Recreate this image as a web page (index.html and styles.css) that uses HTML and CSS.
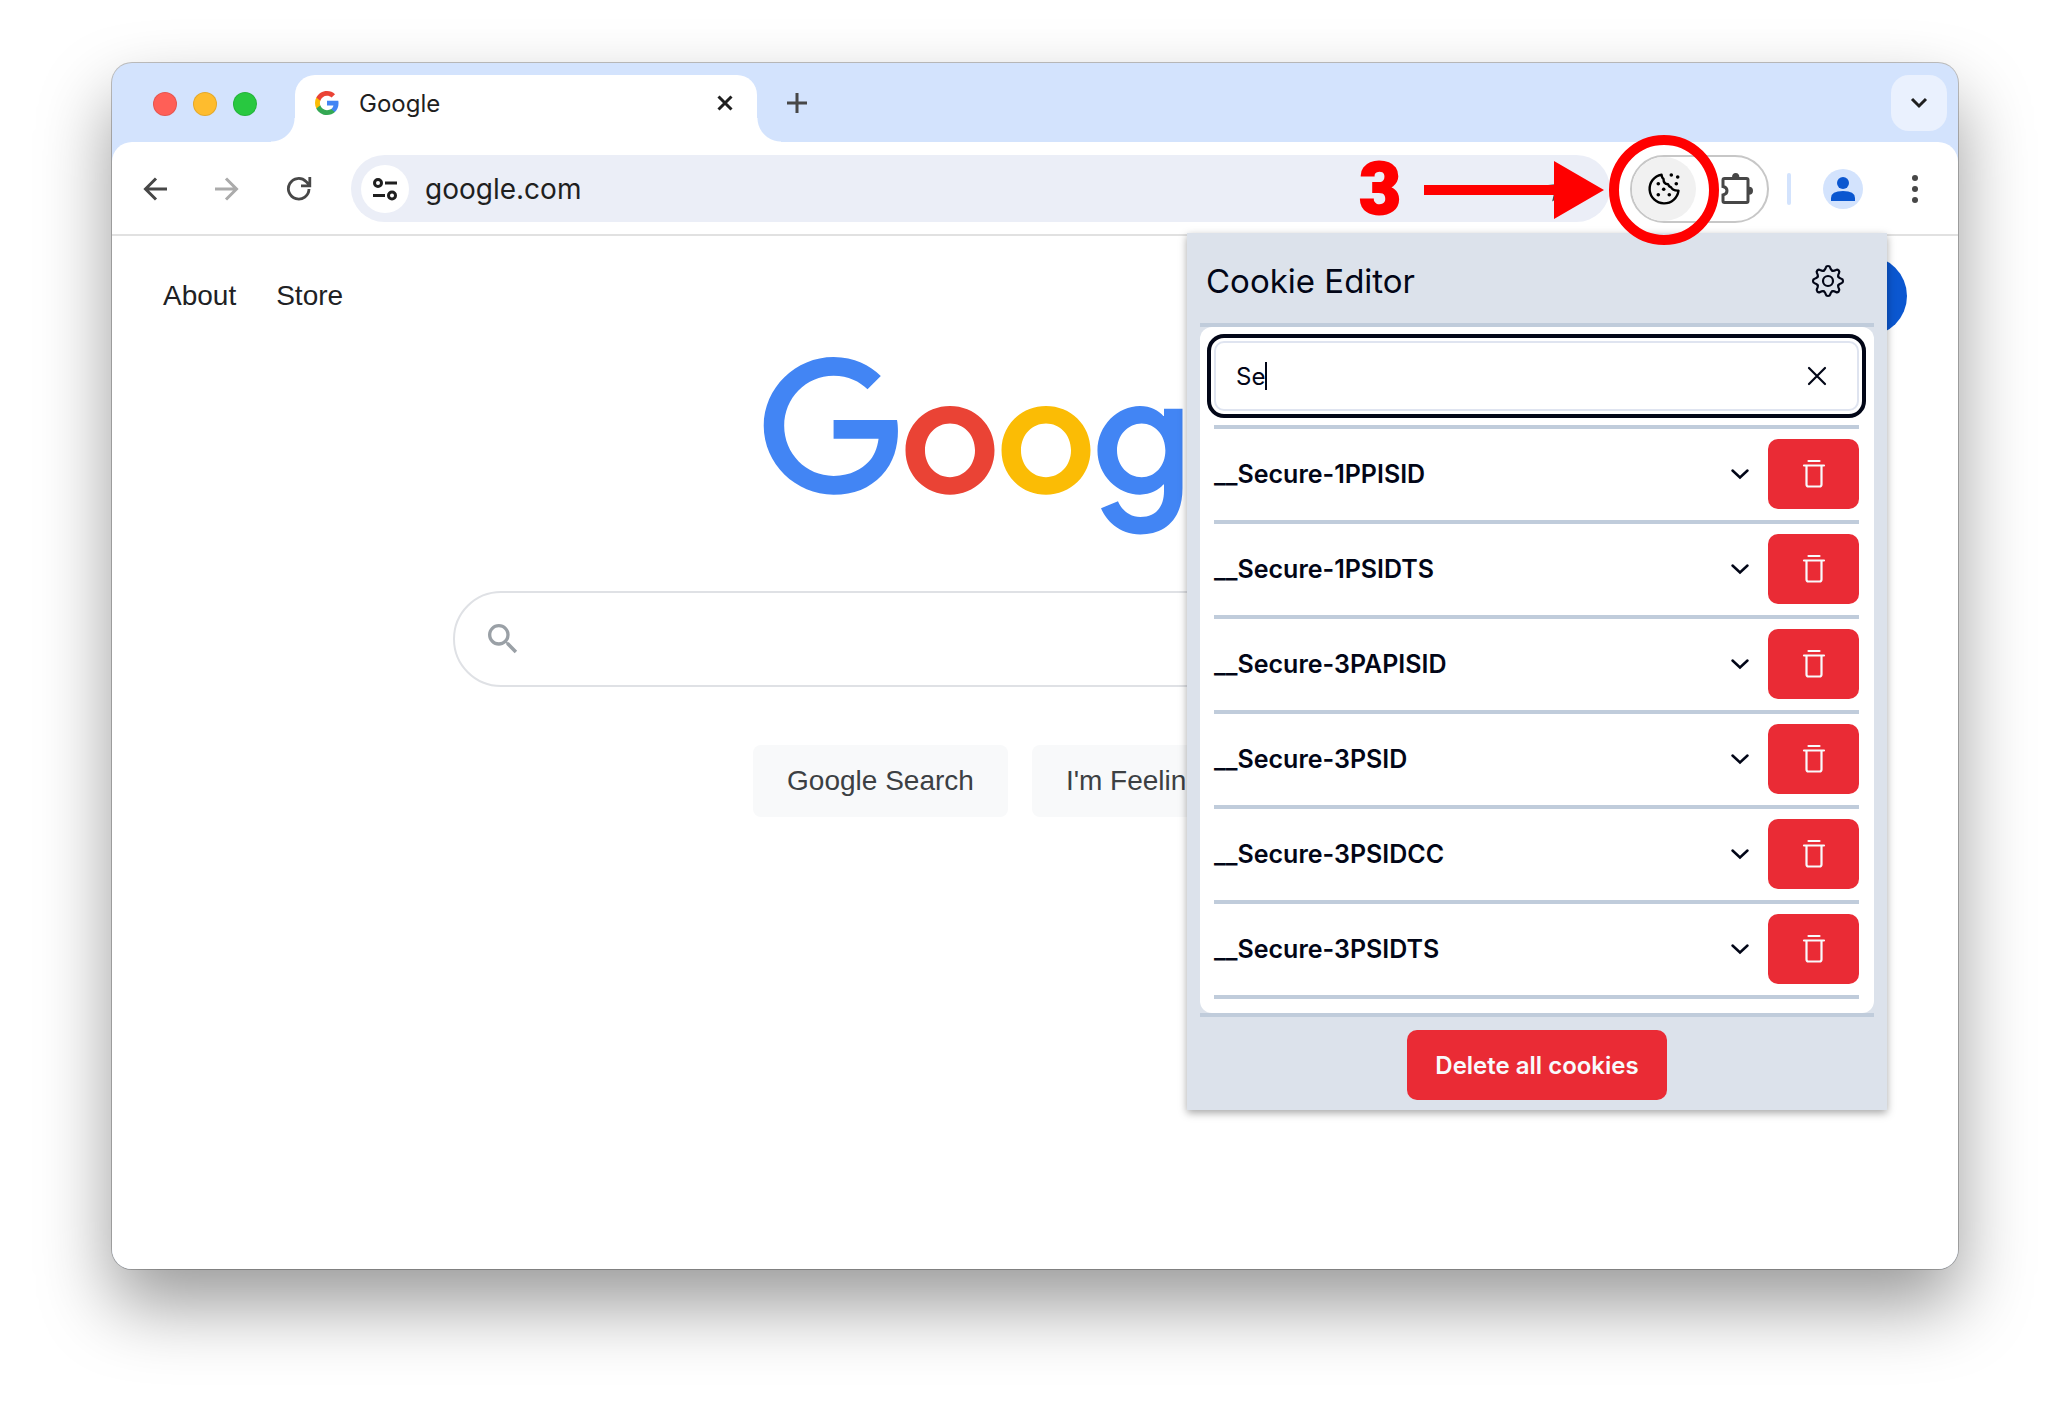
FILE: index.html
```html
<!DOCTYPE html>
<html lang="en">
<head>
<meta charset="utf-8">
<title>Google</title>
<link rel="stylesheet" href="styles.css">
</head>
<body>
<svg class="defs" aria-hidden="true">
  <symbol id="trash" viewBox="0 0 24 30"><path d="M6.500 2h11M2 6.500h20M4.500 7V25.500q0 2 2 2h11q2 0 2-2V7" fill="none" stroke="currentColor" stroke-width="2.200" stroke-linecap="round"/></symbol>
  <symbol id="chevron" viewBox="0 0 20 12"><path d="M2.500 2.500 10 9.500l7.500-7" fill="none" stroke="currentColor" stroke-width="2.500" stroke-linecap="round"/></symbol>
</svg>
<div class="window">
  <header class="tabstrip">
    <div class="lights"><span class="light red"></span><span class="light yellow"></span><span class="light green"></span></div>
    <div class="tab">
      <svg class="favicon" viewBox="1 1 22 22"><path fill="#4285f4" d="M22.560 12.250c0-.78-.07-1.530-.2-2.250H12v4.260h5.920c-.26 1.370-1.040 2.530-2.210 3.310v2.770h3.570c2.080-1.920 3.280-4.740 3.280-8.090z"/><path fill="#34a853" d="M12 23c2.970 0 5.460-.98 7.280-2.660l-3.570-2.770c-.98.66-2.230 1.060-3.710 1.060-2.860 0-5.290-1.930-6.160-4.530H2.180v2.840C3.990 20.530 7.700 23 12 23z"/><path fill="#fbbc05" d="M5.840 14.090c-.22-.66-.35-1.360-.35-2.090s.13-1.430.35-2.090V7.070H2.180C1.430 8.550 1 10.220 1 12s.43 3.450 1.180 4.930l2.850-2.220.81-.62z"/><path fill="#ea4335" d="M12 5.380c1.620 0 3.060.56 4.210 1.640l3.150-3.150C17.450 2.090 14.970 1 12 1 7.700 1 3.990 3.470 2.180 7.070l3.660 2.840c.87-2.600 3.300-4.530 6.160-4.530z"/></svg>
      <span class="tab-title">Google</span>
      <button class="icon-btn tab-close" aria-label="Close tab"><svg width="18" height="18" viewBox="0 0 18 18"><path d="M2.500 2.500l13 13M15.500 2.500l-13 13" stroke="#1f1f1f" stroke-width="3"/></svg></button>
    </div>
    <button class="icon-btn new-tab" aria-label="New tab"><svg width="20" height="20" viewBox="0 0 20 20"><path d="M10 0v20M0 10h20" stroke="#474747" stroke-width="3"/></svg></button>
    <button class="icon-btn tab-search" aria-label="Search tabs"><svg width="20" height="14" viewBox="0 0 20 14"><path d="M3 3l7 7 7-7" fill="none" stroke="#1f1f1f" stroke-width="3"/></svg></button>
  </header>

  <div class="toolbar">
    <div class="nav-buttons">
      <button class="icon-btn" aria-label="Back"><svg width="24" height="24" viewBox="0 0 24 24"><path d="M24 12H2.500M13 1.500 2.500 12 13 22.500" fill="none" stroke="#474747" stroke-width="3"/></svg></button>
      <button class="icon-btn" aria-label="Forward" disabled><svg width="24" height="24" viewBox="0 0 24 24"><path d="M0 12h21.500M11 1.500 21.500 12 11 22.500" fill="none" stroke="#ababab" stroke-width="3"/></svg></button>
      <button class="icon-btn" aria-label="Reload"><svg width="26" height="26" viewBox="0 0 26 26"><path d="M23 13A10.300 10.300 0 1 1 20 5.500L23.500 9M23.800 1v8.800H15" fill="none" stroke="#474747" stroke-width="2.800"/></svg></button>
    </div>
    <div class="omnibox">
      <button class="icon-btn site-info" aria-label="View site information"><svg width="24" height="24" viewBox="0 0 24 24"><g fill="none" stroke="#1f1f1f" stroke-width="3"><circle cx="5" cy="6" r="3.500"/><path d="M12 6h12M0 18.500h12"/><circle cx="19" cy="18.500" r="3.500"/></g></svg></button>
      <input class="address" type="text" value="google.com" aria-label="Address" spellcheck="false">
      <svg class="bookmark" viewBox="0 0 26 26"><path d="M13 2l3.200 7.300 8 .7-6 5.300 1.800 7.700-7-4-7 4 1.800-7.700-6-5.300 8-.7z" fill="none" stroke="#474747" stroke-width="2.500"/></svg>
    </div>
    <div class="extensions">
      <button class="icon-btn cookie-btn" aria-label="Cookie Editor"><svg width="34" height="34" viewBox="-1 -1 34 34"><path d="M13.500 1.600A14.500 14.500 0 1 0 30.500 17.600Q25 18 23 14.200 21 14 20 11.200 15.500 11 15.500 6 13.800 4.500 13.500 1.600z" fill="none" stroke="#000" stroke-width="2.400" stroke-linejoin="round"/><circle cx="10.300" cy="10.700" r="1.800"/><circle cx="15.700" cy="16.300" r="1.800"/><circle cx="10.300" cy="21.700" r="1.800"/><circle cx="21.300" cy="21.700" r="1.800"/><circle cx="23.300" cy="2" r="1.800"/><circle cx="29.700" cy="4" r="1.800"/><circle cx="28.300" cy="10.700" r="1.800"/></svg></button>
      <button class="icon-btn puzzle-btn" aria-label="Extensions"><svg width="34" height="34" viewBox="0 0 34 34"><path d="M2 14.500V8q0-1.500 1.500-1.500h22Q27 6.500 27 8v21q0 1.500-1.500 1.500h-22Q2 30.500 2 29v-6q4-1 4-4.250T2 14.500z" fill="none" stroke="#474747" stroke-width="3"/><path d="M11 5.500a3.700 4.500 0 0 1 7.400 0zM28 14.700a4 4 0 0 1 0 8z" fill="#474747"/></svg></button>
    </div>
    <span class="divider"></span>
    <button class="icon-btn avatar" aria-label="Profile"><svg width="24" height="24" viewBox="0 0 24 24"><circle cx="12" cy="6" r="6" fill="#0b57d0"/><path d="M0 24v-3q0-7 12-7t12 7v3z" fill="#0b57d0"/></svg></button>
    <button class="icon-btn" aria-label="Menu"><svg width="8" height="28" viewBox="0 0 8 28" fill="#474747"><circle cx="4" cy="3" r="3"/><circle cx="4" cy="14" r="3"/><circle cx="4" cy="25" r="3"/></svg></button>
  </div>

  <main class="page">
    <nav class="page-nav">
      <a href="#">About</a>
      <a href="#">Store</a>
      <a href="#" class="sign-in">Sign in</a>
    </nav>
    <svg class="logo" viewBox="0 0 272 92" role="img" aria-label="Google">
      <path fill="#ea4335" d="M115.750 47.180c0 12.770-9.990 22.180-22.250 22.180s-22.250-9.410-22.250-22.180C71.250 34.320 81.240 25 93.500 25s22.250 9.320 22.250 22.180zm-9.740 0c0-7.980-5.790-13.440-12.510-13.440S80.990 39.200 80.990 47.180c0 7.900 5.790 13.440 12.510 13.440s12.510-5.550 12.510-13.440z"/>
      <path fill="#fbbc05" d="M163.750 47.180c0 12.770-9.990 22.180-22.250 22.180s-22.250-9.410-22.250-22.180c0-12.850 9.990-22.180 22.250-22.180s22.250 9.320 22.250 22.180zm-9.740 0c0-7.980-5.790-13.440-12.510-13.440s-12.510 5.460-12.510 13.440c0 7.900 5.790 13.440 12.510 13.440s12.510-5.550 12.510-13.440z"/>
      <path fill="#4285f4" d="M209.750 26.340v39.820c0 16.380-9.660 23.070-21.080 23.070-10.750 0-17.220-7.190-19.660-13.070l8.480-3.530c1.510 3.610 5.210 7.870 11.170 7.870 7.310 0 11.840-4.510 11.840-13v-3.190h-.34c-2.180 2.690-6.380 5.040-11.680 5.040-11.090 0-21.250-9.660-21.250-22.090 0-12.520 10.160-22.260 21.250-22.260 5.290 0 9.490 2.350 11.680 4.960h.34v-3.610h9.250zm-8.560 20.920c0-7.810-5.210-13.520-11.840-13.520-6.720 0-12.350 5.710-12.350 13.520 0 7.730 5.630 13.360 12.350 13.360 6.630 0 11.840-5.630 11.840-13.360z"/>
      <path fill="#34a853" d="M225 3v65h-9.500V3h9.500z"/>
      <path fill="#ea4335" d="M262.020 54.480l7.560 5.040c-2.440 3.610-8.320 9.830-18.480 9.830-12.600 0-22.010-9.740-22.010-22.180 0-13.190 9.490-22.180 20.920-22.180 11.510 0 17.140 9.160 18.980 14.110l1.010 2.520-29.650 12.280c2.270 4.450 5.800 6.720 10.750 6.720 4.960 0 8.400-2.440 10.920-6.140zm-23.270-7.980l19.820-8.230c-1.090-2.770-4.370-4.700-8.230-4.700-4.950 0-11.840 4.370-11.590 12.930z"/>
      <path fill="#4285f4" d="M35.290 41.410V32H67c.31 1.640.47 3.580.47 5.680 0 7.060-1.930 15.790-8.150 22.010-6.050 6.300-13.780 9.660-24.020 9.660C16.320 69.350.36 53.890.36 34.910.36 15.930 16.320.47 35.300.47c10.500 0 17.980 4.120 23.600 9.490l-6.640 6.640c-4.030-3.780-9.490-6.720-16.970-6.720-13.860 0-24.700 11.170-24.700 25.030 0 13.860 10.840 25.030 24.700 25.030 8.990 0 14.110-3.610 17.390-6.890 2.660-2.660 4.410-6.460 5.100-11.650l-22.490.01z"/>
    </svg>
    <div class="search-box">
      <svg width="40" height="40" viewBox="0 0 24 24"><path fill="#9aa0a6" d="M15.500 14h-.79l-.28-.27A6.471 6.471 0 0 0 16 9.500 6.500 6.500 0 1 0 9.500 16c1.610 0 3.090-.59 4.230-1.570l.27.28v.79l5 4.990L20.490 19l-4.990-5zm-6 0C7.010 14 5 11.990 5 9.500S7.010 5 9.500 5 14 7.010 14 9.500 11.990 14 9.500 14z"/></svg>
      <input type="text" aria-label="Search">
    </div>
    <div class="search-actions">
      <button class="search-btn">Google Search</button>
      <button class="search-btn">I'm Feeling Lucky</button>
    </div>
  </main>

  <section class="popup" aria-label="Cookie Editor">
    <header class="popup-header">
      <h1>Cookie Editor</h1>
      <button class="icon-btn gear" aria-label="Settings"><svg width="34" height="34" viewBox="-17 -17 34 34"><g fill="none" stroke="currentColor" stroke-width="2.200" stroke-linecap="round"><path id="cog" d="M-4.200-10.300C-3-10.900-2.600-12-2.200-13.400Q-1.800-15 0-15Q1.800-15 2.200-13.400C2.600-12 3-10.900 4.200-10.300"/><use href="#cog" transform="rotate(45)"/><use href="#cog" transform="rotate(90)"/><use href="#cog" transform="rotate(135)"/><use href="#cog" transform="rotate(180)"/><use href="#cog" transform="rotate(225)"/><use href="#cog" transform="rotate(270)"/><use href="#cog" transform="rotate(315)"/><circle r="5"/></g></svg></button>
    </header>
    <div class="card">
      <div class="filter">
        <input type="text" value="Se" aria-label="Filter cookies" spellcheck="false">
        <span class="caret"></span>
        <button class="icon-btn clear" aria-label="Clear"><svg width="20" height="20" viewBox="0 0 20 20"><path d="M2 2l16 16M18 2L2 18" stroke="currentColor" stroke-width="2.200" stroke-linecap="round"/></svg></button>
      </div>
      <ul class="cookies">
        <li><button class="cookie">__Secure-1PPISID<svg width="20" height="12"><use href="#chevron"/></svg></button><button class="danger" aria-label="Delete __Secure-1PPISID"><svg width="24" height="30"><use href="#trash"/></svg></button></li>
        <li><button class="cookie">__Secure-1PSIDTS<svg width="20" height="12"><use href="#chevron"/></svg></button><button class="danger" aria-label="Delete __Secure-1PSIDTS"><svg width="24" height="30"><use href="#trash"/></svg></button></li>
        <li><button class="cookie">__Secure-3PAPISID<svg width="20" height="12"><use href="#chevron"/></svg></button><button class="danger" aria-label="Delete __Secure-3PAPISID"><svg width="24" height="30"><use href="#trash"/></svg></button></li>
        <li><button class="cookie">__Secure-3PSID<svg width="20" height="12"><use href="#chevron"/></svg></button><button class="danger" aria-label="Delete __Secure-3PSID"><svg width="24" height="30"><use href="#trash"/></svg></button></li>
        <li><button class="cookie">__Secure-3PSIDCC<svg width="20" height="12"><use href="#chevron"/></svg></button><button class="danger" aria-label="Delete __Secure-3PSIDCC"><svg width="24" height="30"><use href="#trash"/></svg></button></li>
        <li><button class="cookie">__Secure-3PSIDTS<svg width="20" height="12"><use href="#chevron"/></svg></button><button class="danger" aria-label="Delete __Secure-3PSIDTS"><svg width="24" height="30"><use href="#trash"/></svg></button></li>
      </ul>
    </div>
    <footer class="popup-footer">
      <button class="danger delete-all">Delete all cookies</button>
    </footer>
  </section>

  <div class="callout">
    <span class="step">3</span>
    <svg class="arrow" width="180" height="60" viewBox="0 0 180 60"><path d="M0 25h130V1l50 29-50 29V35H0z" fill="#f00"/></svg>
    <span class="ring"></span>
  </div>
</div>
</body>
</html>
```

FILE: styles.css
```css
* {
  box-sizing: border-box;
}

body {
  display: flex;
  min-height: 100vh;
  margin: 0;
  padding: 63px 112px 134px;
  background: #fff;
  font-family: Inter, "Liberation Sans", sans-serif;
  color: #1f1f1f;
}

button,
input {
  font: inherit;
  color: inherit;
  border: 0;
  padding: 0;
  margin: 0;
  background: none;
  min-width: 0;
}

input {
  outline: none;
}

svg {
  display: block;
  flex: none;
}

.defs {
  position: absolute;
  width: 0;
  height: 0;
}

.window {
  position: relative;
  flex: 1;
  min-width: 0;
  display: flex;
  flex-direction: column;
  border-radius: 20px;
  background: #d3e3fd;
  box-shadow: 0 0 0 1px rgba(0, 0, 0, 0.24), 0 36px 72px rgba(0, 0, 0, 0.4);
}

.icon-btn {
  display: flex;
  align-items: center;
  justify-content: center;
  flex: none;
  width: 48px;
  height: 48px;
  border-radius: 50%;
}

/* Tab strip */

.tabstrip {
  display: flex;
  align-items: flex-start;
  height: 79px;
  padding: 12px 11px 0 41px;
}

.lights {
  display: flex;
  gap: 16px;
  padding: 17px 38px 0 0;
}

.light {
  width: 24px;
  height: 24px;
  border: 1px solid rgba(0, 0, 0, 0.1);
  border-radius: 50%;
}

.red {
  background: #ff5f57;
}

.yellow {
  background: #febc2e;
}

.green {
  background: #28c840;
}

.tab {
  position: relative;
  display: flex;
  align-items: center;
  width: 462px;
  height: 67px;
  padding: 0 8px 11px 20px;
  border-radius: 20px 20px 0 0;
  background: #fff;
}

/* Flared feet of the active tab */
.tab::before,
.tab::after {
  content: "";
  position: absolute;
  bottom: 0;
  width: 24px;
  height: 24px;
}

.tab::before {
  right: 100%;
  background: radial-gradient(circle at 0 0, #d3e3fd 23px, #fff 24px);
}

.tab::after {
  left: 100%;
  background: radial-gradient(circle at 100% 0, #d3e3fd 23px, #fff 24px);
}

.favicon {
  width: 24px;
  height: 24px;
}

.tab-title {
  flex: 1;
  padding-left: 20px;
  font-size: 24px;
}

.new-tab {
  margin: 4px auto 0 16px;
}

.tab-search {
  width: 56px;
  height: 56px;
  border-radius: 18px;
  background: #eaf1fe;
}

/* Toolbar */

.toolbar {
  display: flex;
  align-items: center;
  height: 94px;
  padding: 1px 19px 0;
  border-bottom: 2px solid #e1e1e1;
  border-radius: 20px 20px 0 0;
  background: #fff;
}

.nav-buttons {
  display: flex;
  gap: 24px;
  margin-right: 28px;
}

.omnibox {
  display: flex;
  align-items: center;
  flex: 1;
  height: 67px;
  margin-right: 20px;
  padding: 0 36px 0 10px;
  border-radius: 34px;
  background: #ebeef7;
}

.site-info {
  background: #fff;
}

.address {
  flex: 1;
  padding-left: 16px;
  font-size: 28px;
}

.bookmark {
  width: 26px;
  height: 26px;
}

.extensions {
  display: flex;
  align-items: center;
  height: 68px;
  padding-right: 12px;
  border: 2px solid #c7c7c7;
  border-radius: 34px;
}

.cookie-btn {
  width: 64px;
  height: 64px;
  background: #f1f1f1;
}

.puzzle-btn {
  width: 34px;
  margin-left: 25px;
}

.divider {
  width: 4px;
  height: 32px;
  margin: 0 32px 0 18px;
  border-radius: 2px;
  background: #d3e3fd;
}

.avatar {
  width: 40px;
  height: 40px;
  margin-right: 28px;
  background: #d3e3fd;
}

/* Page */

.page {
  flex: 1;
  display: flex;
  flex-direction: column;
  align-items: center;
  border-radius: 0 0 20px 20px;
  background: #fff;
  font-family: Arial, "Liberation Sans", sans-serif;
  font-size: 28px;
}

.page-nav {
  display: flex;
  align-items: center;
  align-self: stretch;
  gap: 40px;
  padding: 20px 51px;
}

.page-nav a {
  color: #202124;
  text-decoration: none;
}

.page-nav .sign-in {
  margin-left: auto;
  padding: 0 40px;
  border-radius: 40px;
  line-height: 80px;
  background: #0b57d0;
  color: #fff;
}

.logo {
  width: 544px;
  height: 184px;
}

.search-box {
  display: flex;
  align-items: center;
  gap: 24px;
  width: calc(100% - 80px);
  max-width: 1164px;
  height: 96px;
  margin-top: 51px;
  padding: 0 28px;
  border: 2px solid #dfe1e5;
  border-radius: 48px;
}

.search-box input {
  flex: 1;
}

.search-actions {
  display: flex;
  gap: 24px;
  margin-top: 58px;
}

.search-btn {
  height: 72px;
  padding: 0 34px;
  border-radius: 8px;
  background: #f8f9fa;
  color: #3c4043;
}

/* Extension popup */

.popup {
  position: absolute;
  top: 170px;
  right: 71px;
  width: 700px;
  padding: 0 13px;
  background: #dce2eb;
  box-shadow: 0 3px 8px rgba(0, 0, 0, 0.35);
  color: #020617;
  font-size: 24px;
}

.popup-header {
  display: flex;
  align-items: center;
  justify-content: space-between;
  height: 94px;
  padding: 6px 24px 0 6px;
  border-bottom: 4px solid #c0ccdb;
}

.popup-header h1 {
  margin: 0;
  font-size: 33px;
  font-weight: 400;
}

.card {
  padding: 14px 15px 14px 14px;
  border-radius: 12px;
  background: #fff;
}

.filter {
  position: relative;
  display: flex;
  align-items: center;
  height: 70px;
  padding: 0 18px 0 20px;
  border: 2px solid #dfe4f0;
  border-radius: 10px;
  outline: 4px solid #020617;
  outline-offset: 3px;
}

.filter input {
  flex: 1;
}

.caret {
  position: absolute;
  left: 49px;
  width: 2px;
  height: 28px;
  background: #020617;
}

.gear,
.clear {
  width: 44px;
}

.cookies {
  margin: 14px 0 0;
  padding: 0;
  list-style: none;
  border-top: 4px solid #c0ccdb;
}

.cookies li {
  display: flex;
  gap: 18px;
  padding: 10px 0 11px;
  border-bottom: 4px solid #c0ccdb;
}

.cookie {
  display: flex;
  align-items: center;
  justify-content: space-between;
  flex: 1;
  font-size: 25px;
  font-weight: 600;
}

.danger {
  display: flex;
  align-items: center;
  justify-content: center;
  width: 91px;
  height: 70px;
  border-radius: 10px;
  background: #ea2b35;
  color: #f8fafc;
  font-weight: 600;
}

.popup-footer {
  display: flex;
  justify-content: center;
  padding: 13px 0 10px;
  border-top: 4px solid #c0ccdb;
}

.delete-all {
  width: 260px;
}

/* Step marker drawn over the toolbar */

.callout {
  position: absolute;
  top: 72px;
  right: 239px;
  display: flex;
  align-items: center;
  color: #f00;
}

.step {
  margin-right: 23px;
  font-family: Roboto, "Liberation Sans", sans-serif;
  font-size: 72px;
  font-weight: 900;
  line-height: 72px;
  -webkit-text-stroke: 2px #f00;
}

.arrow {
  margin-right: 5px;
}

.ring {
  width: 110px;
  height: 110px;
  border: 10px solid #f00;
  border-radius: 50%;
}
```
